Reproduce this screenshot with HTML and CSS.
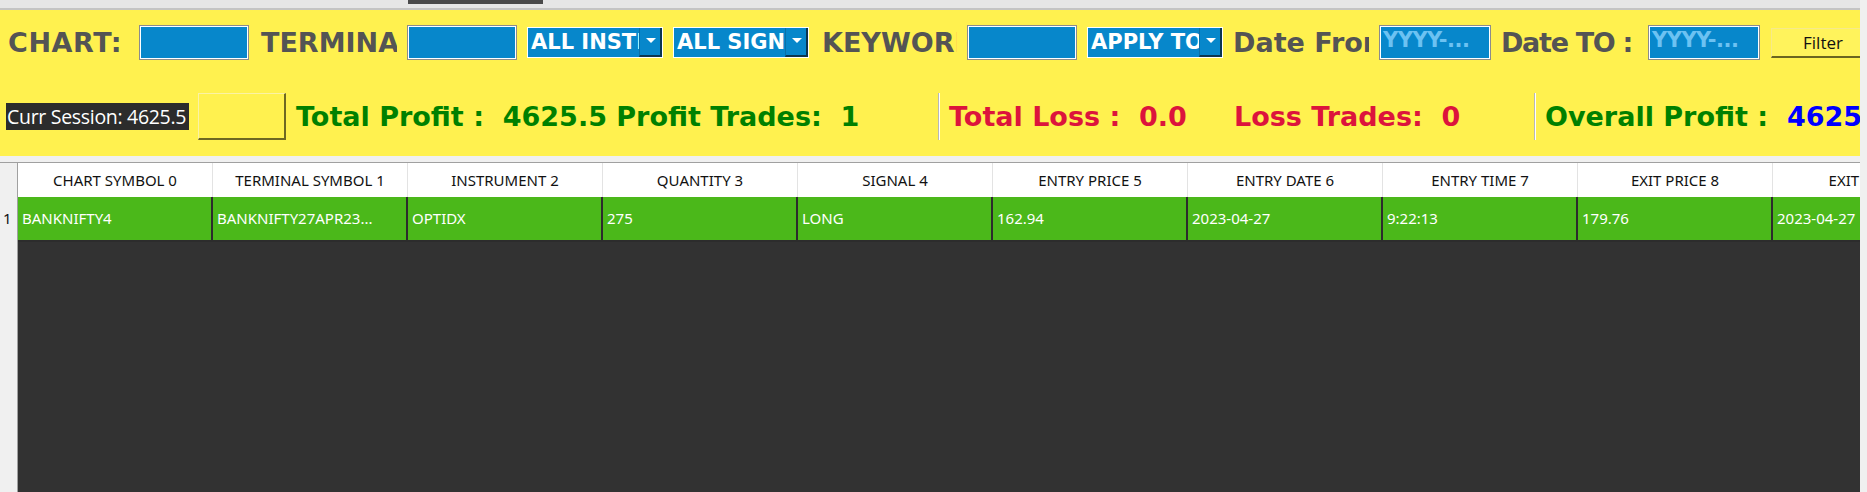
FILE: index.html
```html
<!DOCTYPE html>
<html lang="en">
<head>
  <meta charset="UTF-8">
  <title>Trade Book</title>
  <link rel="stylesheet" href="styles.css">
</head>
<body>
  <div class="window">
    <div class="tabstrip">
      <div class="tab"></div>
    </div>

    <div class="panel">
      <div class="filters">
        <div class="label w-chart">CHART:</div>
        <div class="input"></div>
        <div class="label w-term">TERMINAL:</div>
        <div class="input"></div>
        <div class="combo"><span class="combo-text">ALL INSTRUMENTS</span><span class="combo-btn"></span></div>
        <div class="combo"><span class="combo-text">ALL SIGNALS</span><span class="combo-btn"></span></div>
        <div class="label w-key">KEYWORD:</div>
        <div class="input"></div>
        <div class="combo"><span class="combo-text">APPLY TO ALL</span><span class="combo-btn"></span></div>
        <div class="label w-from">Date From :</div>
        <div class="input date">YYYY-...</div>
        <div class="label w-to">Date TO :</div>
        <div class="input date">YYYY-...</div>
        <button type="button" class="filter-btn">Filter</button>
      </div>

      <div class="stats">
        <div class="session">Curr Session: 4625.5</div>
        <button type="button" class="blank-btn"></button>
        <div class="stat profit w-profit">Total Profit :  4625.5 Profit Trades:  1</div>
        <div class="sep"></div>
        <div class="stat loss w-loss">Total Loss :  0.0</div>
        <div class="stat loss w-losstr">Loss Trades:  0</div>
        <div class="sep"></div>
        <div class="stat profit">Overall Profit :  <span class="overall">4625.5</span></div>
      </div>
    </div>

    <div class="gap"></div>

    <div class="grid">
      <div class="corner"></div>
      <div class="head">CHART SYMBOL 0</div>
      <div class="head">TERMINAL SYMBOL 1</div>
      <div class="head">INSTRUMENT 2</div>
      <div class="head">QUANTITY 3</div>
      <div class="head">SIGNAL 4</div>
      <div class="head">ENTRY PRICE 5</div>
      <div class="head">ENTRY DATE 6</div>
      <div class="head">ENTRY TIME 7</div>
      <div class="head">EXIT PRICE 8</div>
      <div class="head">EXIT DATE 9</div>

      <div class="rownum">1</div>
      <div class="cell">BANKNIFTY4</div>
      <div class="cell">BANKNIFTY27APR23...</div>
      <div class="cell">OPTIDX</div>
      <div class="cell">275</div>
      <div class="cell">LONG</div>
      <div class="cell">162.94</div>
      <div class="cell">2023-04-27</div>
      <div class="cell">9:22:13</div>
      <div class="cell">179.76</div>
      <div class="cell">2023-04-27</div>

      <div class="rowfill"></div>
      <div class="empty"></div>
    </div>
  </div>
</body>
</html>
```

FILE: styles.css
```css
* {
  margin: 0;
  padding: 0;
  box-sizing: border-box;
}

body {
  background: #f0f0f0;
  width: 1867px;
  height: 492px;
  overflow: hidden;
  font-family: 'Noto Sans', sans-serif;
}

.window {
  width: 1860px;
  height: 492px;
  display: flex;
  flex-direction: column;
  overflow: hidden;
}

.tabstrip {
  height: 10px;
  flex: none;
  background: #e6e6e6;
  border-bottom: 2px solid #c4c4c4;
  padding-left: 408px;
}

.tab {
  width: 135px;
  height: 4px;
  background: #4a4a4a;
}

.panel {
  height: 146px;
  flex: none;
  background: #fff14f;
  overflow: hidden;
}

/* first row: filters */
.filters {
  display: flex;
  align-items: center;
  gap: 10px;
  height: 63px;
  padding-left: 8px;
  padding-top: 2px;
  white-space: nowrap;
}

.label {
  flex: none;
  overflow: hidden;
  font-family: 'DejaVu Sans', sans-serif;
  font-weight: bold;
  font-size: 27px;
  color: #545454;
}

.w-chart { width: 121px; letter-spacing: 0.6px; }
.w-term { width: 138px; padding-left: 2px; }
.w-key { width: 138px; padding-left: 3px; }
.w-from { width: 136px; }
.w-to { width: 137px; letter-spacing: -1.3px; }

.input {
  flex: none;
  width: 110px;
  height: 35px;
  border: 1px solid #8c8c8c;
  box-shadow: inset 0 0 0 1px #ffffff;
  background: #0787cb;
}

.input.date {
  width: 112px;
  padding: 2px 0 0 3px;
  font-family: 'DejaVu Sans', sans-serif;
  font-weight: bold;
  font-size: 21px;
  letter-spacing: -0.5px;
  color: #6cc2f2;
  overflow: hidden;
}

.combo {
  flex: none;
  width: 136px;
  height: 31px;
  display: flex;
  border: 1px solid #ffffff;
  background: #0787cb;
}

.combo-text {
  flex: 1;
  overflow: hidden;
  padding: 0 0 0 3px;
  font-family: 'DejaVu Sans', sans-serif;
  font-weight: bold;
  font-size: 21px;
  color: #ffffff;
  line-height: 28px;
}

.combo-btn {
  width: 23px;
  flex: none;
  position: relative;
  background: #0787cb;
  border-left: 1px solid #0a6fa8;
  border-right: 2px solid #0b3550;
  border-bottom: 2px solid #0b3550;
}

.combo-btn::after {
  content: '';
  position: absolute;
  left: 6px;
  top: 10px;
  border-left: 5px solid transparent;
  border-right: 5px solid transparent;
  border-top: 5px solid #ffffff;
}

.filter-btn {
  flex: none;
  width: 110px;
  height: 30px;
  margin-left: 1px;
  background: #fff35c;
  border: 1px solid #f6ea8a;
  border-bottom: 2px solid #6b6520;
  border-right: 1px solid #b9ae3a;
  font-family: 'Open Sans', sans-serif;
  font-size: 17px;
  color: #111111;
  text-align: center;
  padding-right: 6px;
}

/* second row: totals */
.stats {
  display: flex;
  align-items: center;
  height: 83px;
  padding-left: 6px;
  padding-top: 4px;
  white-space: pre;
}

.session {
  flex: none;
  width: 183px;
  height: 27px;
  background: #2c2c2c;
  color: #ffffff;
  font-family: 'Open Sans', sans-serif;
  font-size: 19.5px;
  line-height: 27px;
  padding-left: 1px;
  overflow: hidden;
  letter-spacing: -0.3px;
}

.blank-btn {
  flex: none;
  width: 88px;
  height: 47px;
  margin-left: 9px;
  background: #fff14f;
  border: 1px solid #fbf2a4;
  border-right: 2px solid #6e6822;
  border-bottom: 2px solid #6e6822;
}

.stat {
  flex: none;
  font-family: 'DejaVu Sans', sans-serif;
  font-weight: bold;
  font-size: 27px;
}

.profit { color: #008000; }
.loss { color: #dc143c; }
.overall { color: #0000ff; }

.w-profit { margin-left: 10px; width: 642px; }
.w-loss { width: 285px; margin-left: 10px; }
.w-losstr { width: 300px; }

.sep {
  flex: none;
  width: 2px;
  height: 47px;
  background: #ffffff;
  border-left: 1px solid #b8b8b8;
}

.sep + .stat { margin-left: 9px; }

.gap {
  height: 7px;
  flex: none;
  background: #f0f0f0;
  border-bottom: 1px solid #a0a0a0;
}

/* data grid */
.grid {
  flex: 1;
  display: grid;
  grid-template-columns: 18px repeat(10, 195px);
  grid-template-rows: 34px 45px 1fr;
  background: #323232;
  overflow: hidden;
  font-family: 'Noto Sans', sans-serif;
  font-size: 15px;
}

.corner {
  background: #f0f0f0;
  border-right: 1px solid #a0a0a0;
}

.head {
  background: #ffffff;
  border-right: 1px solid #e3e3e3;
  color: #111111;
  text-align: center;
  line-height: 34px;
  white-space: nowrap;
  overflow: hidden;
}

.rownum {
  background: #f0f0f0;
  border-right: 1px solid #a0a0a0;
  color: #111111;
  padding-left: 3px;
  line-height: 43px;
}

.cell {
  background: #4bb81a;
  border-right: 2px solid #2c2c2c;
  border-bottom: 2px solid #2c2c2c;
  color: #ffffff;
  padding-left: 4px;
  line-height: 43px;
  white-space: nowrap;
  overflow: hidden;
}

.rowfill {
  background: #f0f0f0;
  border-right: 1px solid #a0a0a0;
}

.empty {
  grid-column: 2 / -1;
}
```
